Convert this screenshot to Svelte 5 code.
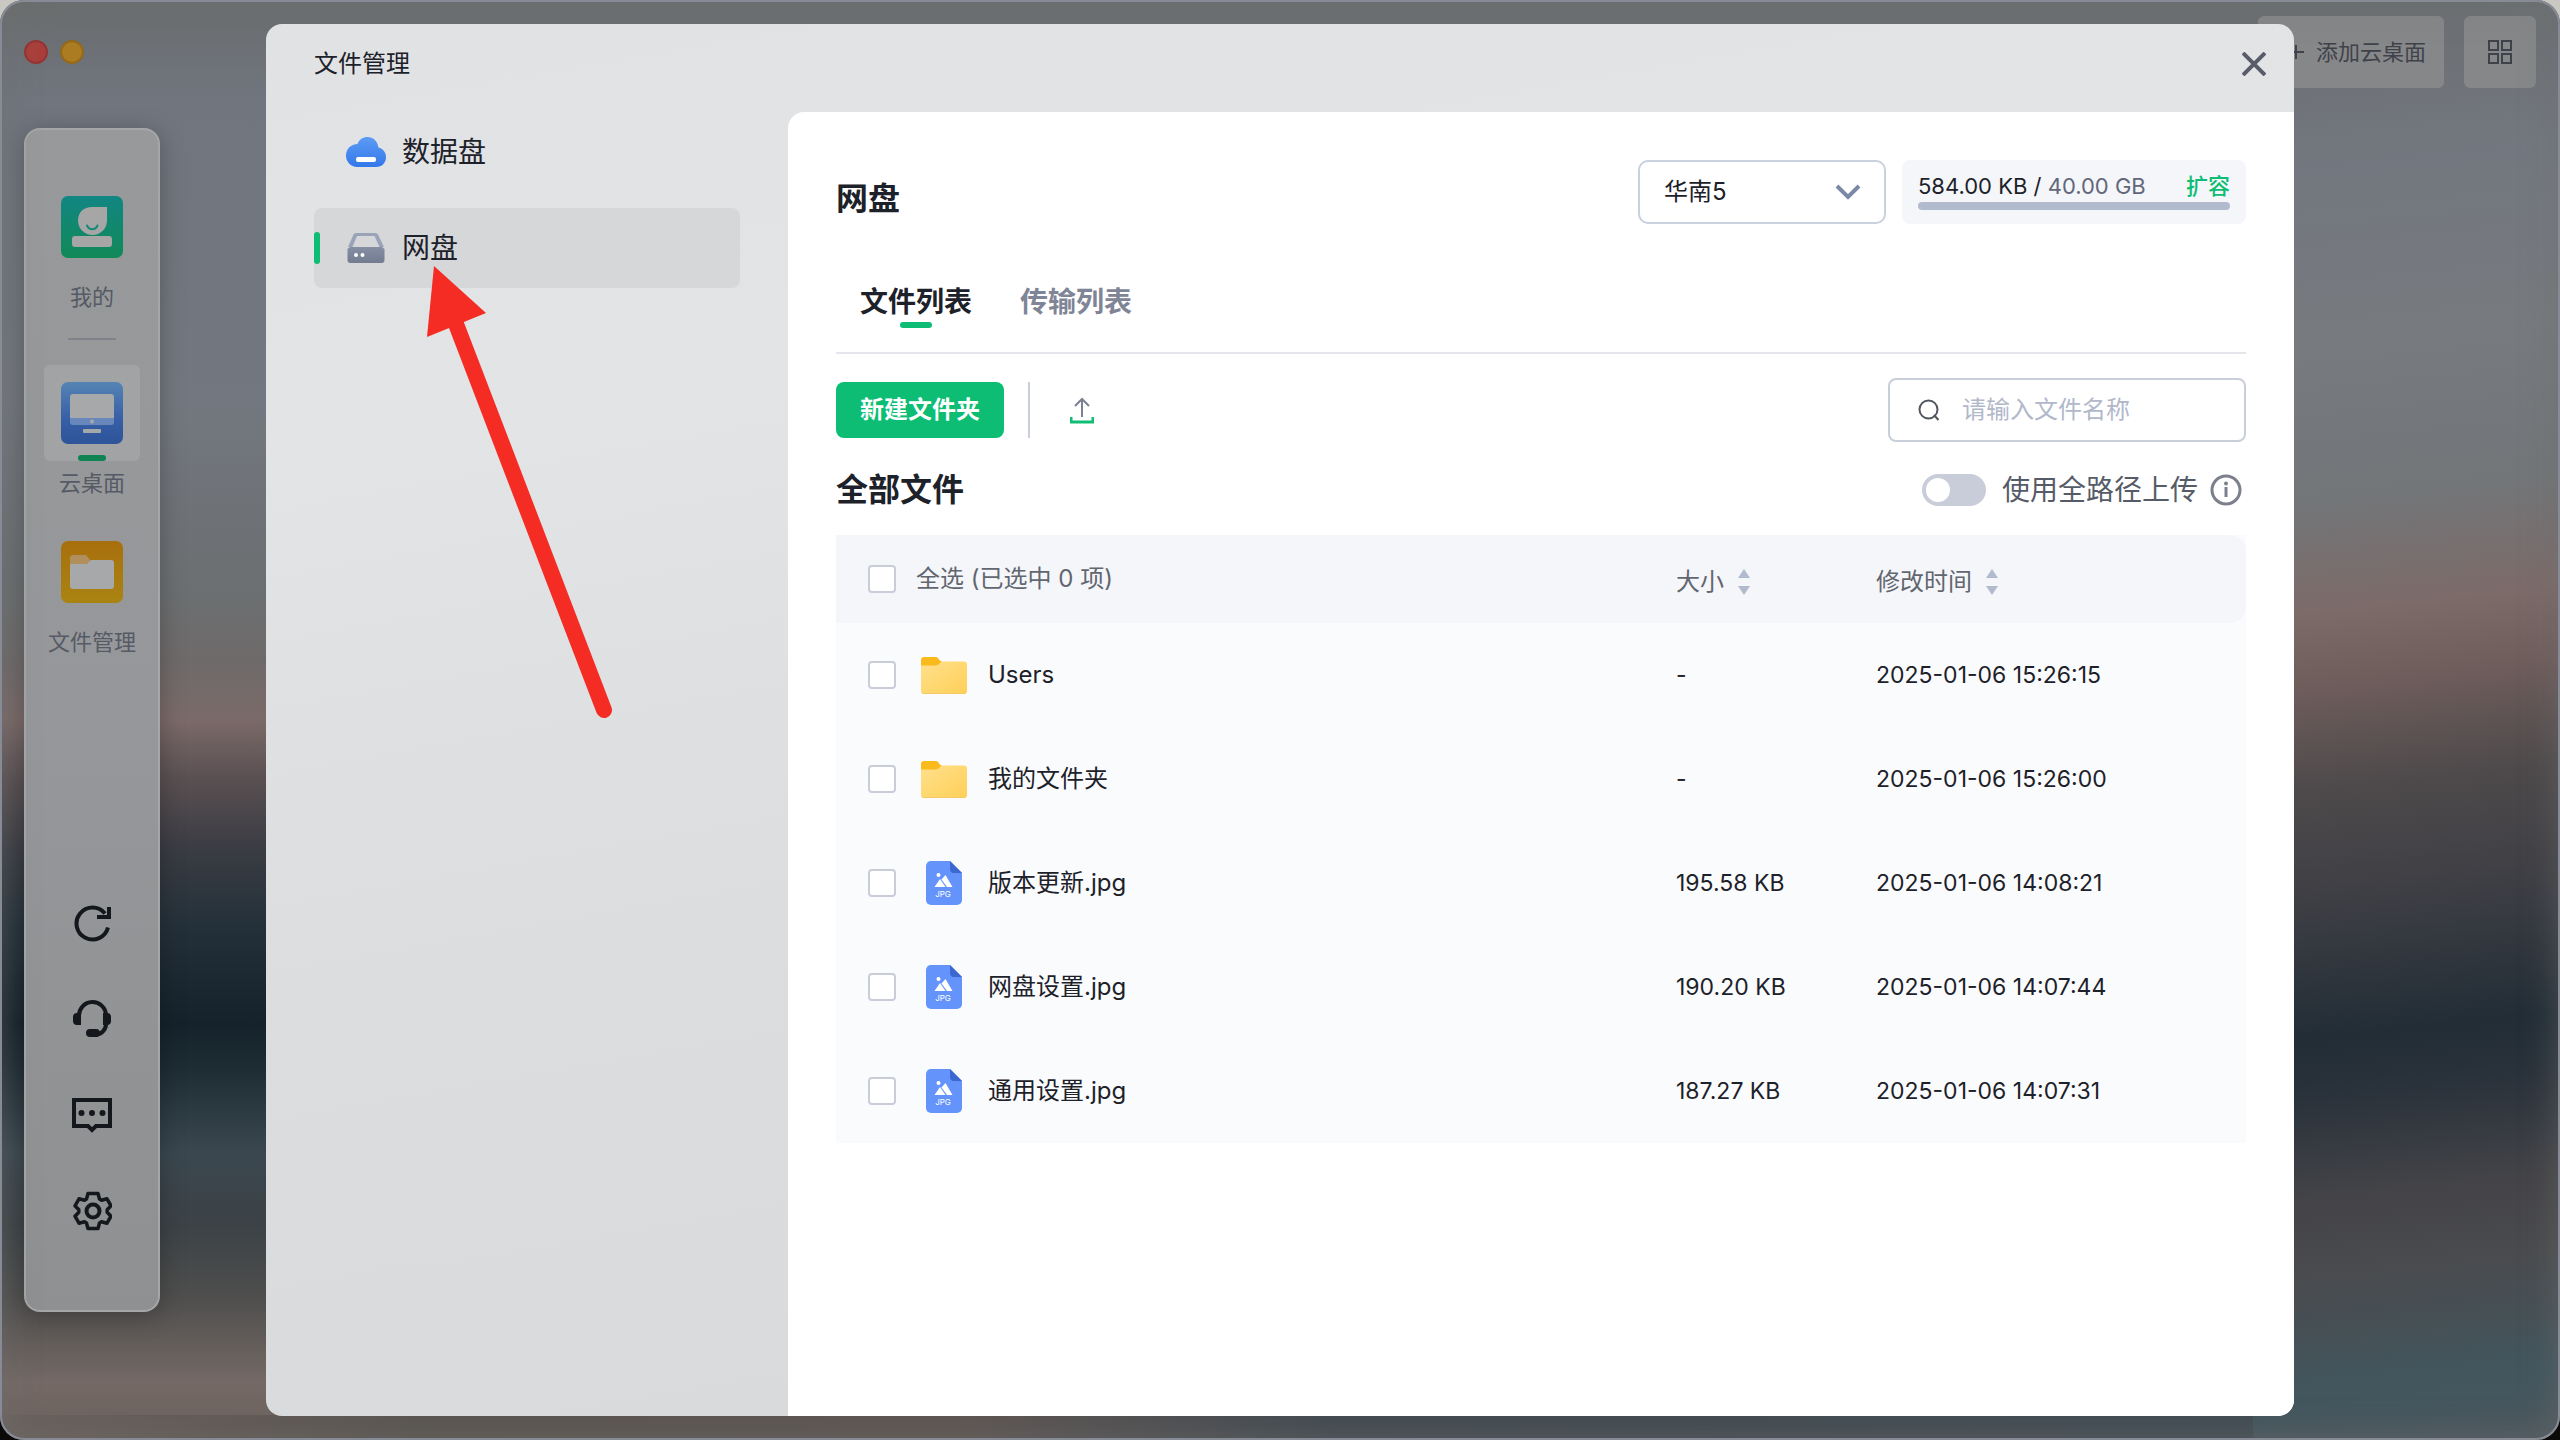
<script lang="ts">
	type Row = { name: string; kind: 'folder' | 'jpg'; size: string; time: string; checked: boolean };

	let files = $state<Row[]>([
		{ name: 'Users', kind: 'folder', size: '-', time: '2025-01-06 15:26:15', checked: false },
		{ name: '我的文件夹', kind: 'folder', size: '-', time: '2025-01-06 15:26:00', checked: false },
		{ name: '版本更新.jpg', kind: 'jpg', size: '195.58 KB', time: '2025-01-06 14:08:21', checked: false },
		{ name: '网盘设置.jpg', kind: 'jpg', size: '190.20 KB', time: '2025-01-06 14:07:44', checked: false },
		{ name: '通用设置.jpg', kind: 'jpg', size: '187.27 KB', time: '2025-01-06 14:07:31', checked: false }
	]);

	let region = $state('华南5');
	let keyword = $state('');
	let fullPath = $state(false);
	let tab = $state('files');
	let disk = $state('net');

	let selected = $derived(files.filter((f) => f.checked).length);

	function toggleAll(event: Event) {
		const on = (event.currentTarget as HTMLInputElement).checked;
		for (const f of files) f.checked = on;
	}
</script>

{#snippet sortIcon()}
	<svg class="sort" width="12" height="26" viewBox="0 0 12 26" aria-hidden="true">
		<path d="M6 0l6 9H0zM6 26l6-9H0z" fill="#b1bbcd" />
	</svg>
{/snippet}

<div class="window">
	<header class="titlebar">
		<div class="lights">
			<button class="light red" aria-label="关闭窗口"></button>
			<button class="light yellow" aria-label="最小化"></button>
		</div>
		<div class="actions">
			<button class="glass">
				<svg width="16" height="16" viewBox="0 0 16 16" aria-hidden="true">
					<path d="M8 1v14M1 8h15" stroke="#3f424a" stroke-width="2" />
				</svg>
				添加云桌面
			</button>
			<button class="glass square" aria-label="视图">
				<svg width="24" height="24" viewBox="0 0 24 24" fill="none" stroke="#3f424a" stroke-width="2" aria-hidden="true">
					<path d="M1 1h9v9H1zM14 1h9v9h-9zM1 14h9v9H1zM14 14h9v9h-9z" />
				</svg>
			</button>
		</div>
	</header>

	<aside class="dock">
		<button class="app">
			<span class="tile">
				<svg width="62" height="62" viewBox="0 0 62 62" aria-hidden="true">
					<defs>
						<linearGradient id="g-me" x1="0" y1="0" x2="0" y2="1">
							<stop offset="0" stop-color="#128683" />
							<stop offset="1" stop-color="#118957" />
						</linearGradient>
					</defs>
					<rect width="62" height="62" rx="7" fill="url(#g-me)" />
					<path d="M31 11h15v13.500a14.500 14.500 0 1 1-29 0C17 16 23 11 31 11z" fill="#a6a6a7" />
					<path d="M26 29.500c2.500 5 8 5 10.500 0" fill="none" stroke="#128875" stroke-width="2" stroke-linecap="round" />
					<rect x="11" y="40" width="40" height="11" rx="3" fill="#a6a6a7" />
				</svg>
			</span>
			<span class="label">我的</span>
		</button>
		<hr />
		<button class="app active">
			<span class="tile">
				<svg width="62" height="62" viewBox="0 0 62 62" aria-hidden="true">
					<defs>
						<linearGradient id="g-desk" x1="0" y1="0" x2="0" y2="1">
							<stop offset="0" stop-color="#5584b4" />
							<stop offset="0.600" stop-color="#365fa6" />
							<stop offset="1" stop-color="#2e5499" />
						</linearGradient>
					</defs>
					<rect width="62" height="62" rx="7" fill="url(#g-desk)" />
					<path d="M9 36h44v4a3 3 0 0 1-3 3H12a3 3 0 0 1-3-3z" fill="#6888bb" />
					<path d="M12 12h38a3 3 0 0 1 3 3v21H9V15a3 3 0 0 1 3-3z" fill="#a7a8aa" />
					<circle cx="31" cy="39.500" r="2" fill="#a7a8aa" />
					<rect x="22" y="47" width="18" height="4" rx="1" fill="#a7a8aa" />
				</svg>
			</span>
			<span class="label">云桌面</span>
		</button>
		<button class="app">
			<span class="tile">
				<svg width="62" height="62" viewBox="0 0 62 62" aria-hidden="true">
					<defs>
						<linearGradient id="g-file" x1="0" y1="0" x2="0" y2="1">
							<stop offset="0" stop-color="#a86f0d" />
							<stop offset="1" stop-color="#a98412" />
						</linearGradient>
					</defs>
					<rect width="62" height="62" rx="7" fill="url(#g-file)" />
					<path d="M9 24v-7a3 3 0 0 1 3-3h13l4 5v5z" fill="#b08f5c" />
					<path d="M9 23h17l4-4h20a3 3 0 0 1 3 3v23a3 3 0 0 1-3 3H12a3 3 0 0 1-3-3z" fill="#a7a8aa" />
				</svg>
			</span>
			<span class="label">文件管理</span>
		</button>

		<div class="tools">
			<button aria-label="刷新">
				<svg width="40" height="40" viewBox="0 0 40 40" fill="none" stroke="#14171b" stroke-width="4" aria-hidden="true">
					<path d="M36 24.500A16 16 0 1 1 33 10.500" />
					<path d="M37 4v10H25" />
				</svg>
			</button>
			<button aria-label="客服">
				<svg width="40" height="40" viewBox="0 0 40 40" aria-hidden="true">
					<path d="M7 20v-3a13 13 0 0 1 27-1v9c0 6-5 11-12 11" fill="none" stroke="#14171b" stroke-width="4" />
					<path d="M5 14h4v12H5a4 4 0 0 1-4-4v-4a4 4 0 0 1 4-4zM31 14h4a4 4 0 0 1 4 4v4a4 4 0 0 1-4 4h-4z" fill="#14171b" />
					<rect x="14" y="30" width="14" height="8" rx="4" fill="#14171b" />
				</svg>
			</button>
			<button aria-label="反馈">
				<svg width="40" height="40" viewBox="0 0 40 40" aria-hidden="true">
					<path d="M2 5h36v26H24l-4 4-4-4H2z" fill="none" stroke="#14171b" stroke-width="4" />
					<circle cx="9.500" cy="18" r="3" fill="#14171b" />
					<circle cx="20" cy="18" r="3" fill="#14171b" />
					<circle cx="30.500" cy="18" r="3" fill="#14171b" />
				</svg>
			</button>
			<button aria-label="设置">
				<svg width="40" height="40" viewBox="0 0 40 40" fill="none" stroke="#14171b" stroke-width="3.500" stroke-linejoin="round" aria-hidden="true">
					<path d="M16 2.500h10l1.500 5.500 2 1.200 5.500-1.400 4 7-3.800 4v2.400l3.800 4-4 7-5.500-1.400-2 1.200-1.500 5.500H16l-1.500-5.500-2-1.200L7 32.200l-4-7 3.800-4v-2.400l-3.800-4 4-7 5.500 1.400 2-1.200z" />
					<circle cx="21" cy="20" r="6.500" stroke-width="4" />
				</svg>
			</button>
		</div>
	</aside>

	<section class="modal" role="dialog" aria-labelledby="dialog-title">
		<header class="modal-head">
			<h1 id="dialog-title">文件管理</h1>
			<button class="close" aria-label="关闭">
				<svg width="24" height="24" viewBox="0 0 24 24" aria-hidden="true">
					<path d="M1 1l22 22M23 1L1 23" stroke="#585d69" stroke-width="4" />
				</svg>
			</button>
		</header>

		<div class="modal-body">
			<nav>
				<button class="disk" class:current={disk === 'data'} onclick={() => (disk = 'data')}>
					<svg width="40" height="32" viewBox="0 0 40 32" aria-hidden="true">
						<defs>
							<linearGradient id="g-cloud" x1="0" y1="0" x2="0" y2="1">
								<stop offset="0" stop-color="#5c9cf5" />
								<stop offset="1" stop-color="#3378ea" />
							</linearGradient>
						</defs>
						<path d="M11 31a11 11 0 0 1-11-11.500C0 13 5 8 11.500 8 13 3.500 17 1 21.500 1 27 1 31.500 5 32.500 11.500 37 12.500 40 16.500 40 21c0 6-4 10-10 10z" fill="url(#g-cloud)" />
						<rect x="10" y="21" width="20" height="5" rx="2" fill="#fff" />
					</svg>
					数据盘
				</button>
				<button class="disk" class:current={disk === 'net'} onclick={() => (disk = 'net')}>
					<svg width="40" height="32" viewBox="0 0 40 32" aria-hidden="true">
						<defs>
							<linearGradient id="g-drive" x1="0" y1="0" x2="0" y2="1">
								<stop offset="0" stop-color="#868ea4" />
								<stop offset="1" stop-color="#737b8f" />
							</linearGradient>
						</defs>
						<path fill-rule="evenodd" d="M10 1h19.500a3 3 0 0 1 2.500 1.500L38 15H2L7.500 2.500A3 3 0 0 1 10 1zM11 4L6.500 15h27L28.500 4z" fill="#9aa3b8" />
						<path d="M4 15h32l2.500 2v11a3 3 0 0 1-3 3h-31a3 3 0 0 1-3-3V17z" fill="url(#g-drive)" />
						<circle cx="10" cy="23" r="2" fill="#fff" />
						<circle cx="16.500" cy="23" r="2" fill="#fff" />
					</svg>
					网盘
				</button>
			</nav>

			<main>
				<div class="head">
					<h2>网盘</h2>
					<div class="region">
						<select bind:value={region} aria-label="区域">
							<option>华南5</option>
						</select>
						<svg width="26" height="16" viewBox="0 0 26 16" aria-hidden="true">
							<path d="M2 2l11 11L24 2" fill="none" stroke="#7c89a6" stroke-width="4" />
						</svg>
					</div>
					<div class="quota">
						<p>
							<span>584.00 KB / <em>40.00 GB</em></span>
							<a href="#expand">扩容</a>
						</p>
						<div class="bar"></div>
					</div>
				</div>

				<div class="tabs" role="tablist">
					<button role="tab" aria-selected={tab === 'files'} onclick={() => (tab = 'files')}>文件列表</button>
					<button role="tab" aria-selected={tab === 'transfers'} onclick={() => (tab = 'transfers')}>传输列表</button>
				</div>

				<div class="toolbar">
					<button class="primary">新建文件夹</button>
					<span class="sep"></span>
					<button class="upload" aria-label="上传">
						<svg width="24" height="28" viewBox="0 0 24 28" fill="none" stroke-width="2" aria-hidden="true">
							<path d="M12 21V3M5 10l7-7 7 7" stroke="#7b8190" />
							<path d="M1 21v5h22v-5" stroke="#12bd74" stroke-width="3" />
						</svg>
					</button>
					<label class="search">
						<svg width="22" height="22" viewBox="0 0 22 22" fill="none" stroke="#51555f" stroke-width="2" aria-hidden="true">
							<circle cx="10.500" cy="10.500" r="9" />
							<path d="M16 16l4.500 5" />
						</svg>
						<input type="text" bind:value={keyword} placeholder="请输入文件名称" aria-label="搜索文件" />
					</label>
				</div>

				<div class="subhead">
					<h2>全部文件</h2>
					<label class="switch">
						<input type="checkbox" role="switch" bind:checked={fullPath} />
						使用全路径上传
					</label>
					<svg width="32" height="32" viewBox="0 0 32 32" aria-hidden="true">
						<circle cx="16" cy="16" r="14" fill="none" stroke="#7b808c" stroke-width="3" />
						<path d="M16 13v10" stroke="#7b808c" stroke-width="3" />
						<circle cx="16" cy="9.500" r="2" fill="#7b808c" />
					</svg>
				</div>

				<table>
					<colgroup>
						<col />
						<col class="col-size" />
						<col class="col-time" />
					</colgroup>
					<thead>
						<tr>
							<th>
								<label class="all">
									<input type="checkbox" checked={selected === files.length} onchange={toggleAll} />
									全选 (已选中 {selected} 项)
								</label>
							</th>
							<th><button>大小{@render sortIcon()}</button></th>
							<th><button>修改时间{@render sortIcon()}</button></th>
						</tr>
					</thead>
					<tbody>
						{#each files as file (file.name)}
							<tr>
								<td>
									<label>
										<input type="checkbox" bind:checked={file.checked} />
										{#if file.kind === 'folder'}
											<svg width="48" height="48" viewBox="0 0 48 48" aria-hidden="true">
												<defs>
													<linearGradient id="g-folder" x1="0" y1="0" x2="1" y2="1">
														<stop offset="0" stop-color="#ffe08c" />
														<stop offset="1" stop-color="#ffd058" />
													</linearGradient>
												</defs>
												<path d="M1 15V9a3 3 0 0 1 3-3h12c3 0 3 4.500 6 4.500V15z" fill="#fbba1c" />
												<path d="M1 14.500h15c3 0 4-4 7-4h21a3 3 0 0 1 3 3V40a3 3 0 0 1-3 3H4a3 3 0 0 1-3-3z" fill="url(#g-folder)" />
												<path d="M2 41.500q1 1 2 1h40q1 0 2-1" fill="none" stroke="#f6c766" />
											</svg>
										{:else}
											<svg width="48" height="48" viewBox="0 0 48 48" aria-hidden="true">
												<path d="M11 2h19l12 12v27a5 5 0 0 1-5 5H11a5 5 0 0 1-5-5V7a5 5 0 0 1 5-5z" fill="#6593fc" />
												<path d="M30 2l12 12h-8a4 4 0 0 1-4-4z" fill="#3a67d0" />
												<circle cx="18.500" cy="16" r="2" fill="#fff" />
												<path d="M14.500 28l5.500-8 5.500 8zM21.500 20.500l4-4.500 7 12h-5.500z" fill="#fff" />
												<text x="23" y="38" text-anchor="middle">JPG</text>
											</svg>
										{/if}
										{file.name}
									</label>
								</td>
								<td>{file.size}</td>
								<td>{file.time}</td>
							</tr>
						{/each}
					</tbody>
				</table>
			</main>
		</div>

		<!-- guide arrow pointing at the current disk -->
		<svg class="pointer" width="200" height="470" viewBox="0 0 200 470" aria-hidden="true">
			<path d="M18 2l52 47-59 24z" fill="#f42c24" />
			<path d="M40 60l148 386" stroke="#f42c24" stroke-width="16" stroke-linecap="round" />
		</svg>
	</section>
</div>

<style>
	:global(body) {
		margin: 0;
		background: linear-gradient(#c9c8c2 50%, #0b0a08 50%);
	}

	.window {
		position: relative;
		box-sizing: border-box;
		min-height: 100vh;
		display: flex;
		flex-direction: column;
		align-items: flex-start;
		padding-bottom: 128px;
		border-radius: 24px;
		font-family: Inter, 'Noto Sans CJK SC', sans-serif;
		font-size: 24px;
		line-height: 32px;
		color: #1d2129;
		background:
			linear-gradient(174deg, #6a6e70 0%, #73777f 12%, #777a7e 24%, #727679 34%, #7c6b69 42%, #6f5d5c 47%, #4e4a4b 54%, #3d3e44 62%, #222d36 71%, #2a323b 75%, #444448 82%, #4a4b4e 87%, #42565e 95%, #4b565d 100%) no-repeat right / 12% 100%,
			linear-gradient(90deg, #6b615d, #5a5550 16%, #5d5552 38%, #424a51 52%, #414c53 88%, #4b565d) no-repeat bottom / 100% 25px,
			linear-gradient(#6a6d6e 0%, #70757e 7%, #73777f 28%, #6b6f71 41%, #6f6a6a 46%, #7b6a69 50%, #5a5052 54%, #3a3c43 59%, #25313a 64%, #15222b 71%, #1d2b33 74%, #3a474f 80%, #3c4246 85%, #4e4e4d 90%, #746965 96%, #6b615d 100%);
	}

	/* frame line and the lighter haze along the window edge */
	.window::after {
		content: '';
		position: absolute;
		inset: 0;
		border-radius: inherit;
		box-shadow:
			inset 0 0 0 2px #868b96,
			inset 0 0 36px rgb(110 110 110 / 0.6);
		pointer-events: none;
	}

	h1,
	h2,
	p {
		margin: 0;
	}

	button {
		padding: 0;
		border: 0;
		background: none;
		font: inherit;
		color: inherit;
		cursor: pointer;
	}

	svg {
		display: block;
		flex-shrink: 0;
	}

	.titlebar {
		align-self: stretch;
		display: flex;
		align-items: center;
		justify-content: space-between;
		padding: 16px 24px 40px;
	}

	.lights,
	.actions {
		display: flex;
		gap: 12px;
	}

	.light {
		width: 24px;
		height: 24px;
		border-radius: 50%;
	}

	.red {
		background: #a93f3b;
		border: 2px solid #953432;
	}

	.yellow {
		background: #ab7c22;
		border: 2px solid #93691a;
	}

	.actions {
		gap: 20px;
	}

	.glass {
		display: flex;
		align-items: center;
		justify-content: center;
		gap: 12px;
		height: 72px;
		padding: 0 18px 0 30px;
		border-radius: 6px;
		background: #868789;
		font-size: 22px;
		color: #3f424a;
	}

	.square {
		width: 72px;
		padding: 0;
	}

	.dock {
		flex: 1;
		box-sizing: border-box;
		width: 136px;
		margin-left: 24px;
		padding: 49px 0 79px;
		display: flex;
		flex-direction: column;
		align-items: center;
		gap: 25px;
		border: 2px solid #a5a6a7;
		border-radius: 16px;
		background: linear-gradient(#98999a, #96979a 50%, #8e9091);
		box-shadow: 0 4px 24px rgb(0 0 0 / 0.25);
	}

	.dock hr {
		width: 48px;
		height: 2px;
		margin: 0;
		border: 0;
		background: #7f828a;
	}

	.app {
		display: flex;
		flex-direction: column;
		align-items: center;
		gap: 6px;
	}

	.tile {
		position: relative;
		display: grid;
		place-items: center;
		width: 96px;
		height: 96px;
		border-radius: 6px;
	}

	.active .tile {
		background: #a2a3a4;
	}

	.active .tile::after {
		content: '';
		position: absolute;
		bottom: 0;
		width: 28px;
		height: 6px;
		border-radius: 3px;
		background: #0f8452;
	}

	.label {
		font-size: 22px;
		color: #555a65;
	}

	.tools {
		margin-top: auto;
		display: flex;
		flex-direction: column;
		gap: 56px;
	}

	.modal {
		position: absolute;
		inset: 24px 266px;
		z-index: 1;
		display: flex;
		flex-direction: column;
		overflow: hidden;
		border-radius: 16px;
		background: linear-gradient(170deg, #e1e2e4, #e2e4e5 25%, #dcdddf 55%, #d8d9db);
	}

	.modal-head {
		display: flex;
		align-items: center;
		justify-content: space-between;
		box-sizing: border-box;
		height: 88px;
		padding: 0 28px 8px 48px;
	}

	.modal-head h1 {
		font-size: 24px;
		font-weight: 400;
	}

	.modal-body {
		flex: 1;
		display: flex;
	}

	nav {
		box-sizing: border-box;
		width: 522px;
		padding: 0 48px;
		display: flex;
		flex-direction: column;
		gap: 16px;
	}

	.disk {
		position: relative;
		display: flex;
		align-items: center;
		gap: 16px;
		height: 80px;
		padding-left: 32px;
		border-radius: 8px;
		font-size: 28px;
	}

	.current {
		background: #d6d7d9;
	}

	.current::before {
		content: '';
		position: absolute;
		left: 0;
		width: 6px;
		height: 32px;
		border-radius: 3px;
		background: #0cbd73;
	}

	main {
		flex: 1;
		min-width: 0;
		padding: 48px;
		border-top-left-radius: 16px;
		background: #fff;
	}

	h2 {
		font-size: 32px;
		font-weight: 600;
		line-height: 40px;
	}

	.head {
		display: flex;
		align-items: center;
		gap: 16px;
	}

	.head h2 {
		margin-right: auto;
		padding-top: 14px;
	}

	.region {
		display: grid;
		align-items: center;
		width: 248px;
	}

	.region select,
	.region svg {
		grid-area: 1 / 1;
	}

	.region svg {
		justify-self: end;
		margin-right: 25px;
		pointer-events: none;
	}

	.region select {
		appearance: none;
		height: 64px;
		padding: 0 24px;
		border: 2px solid #c9d0de;
		border-radius: 10px;
		background: #fff;
		font: inherit;
		color: inherit;
	}

	.quota {
		box-sizing: border-box;
		width: 344px;
		height: 64px;
		padding: 10px 16px;
		border-radius: 8px;
		background: #f4f6fa;
		font-size: 22px;
	}

	.quota p {
		display: flex;
		justify-content: space-between;
		white-space: nowrap;
	}

	.quota em {
		font-style: normal;
		color: #62677a;
	}

	.quota a {
		color: #0cbd73;
		font-weight: 500;
		text-decoration: none;
	}

	.bar {
		height: 8px;
		border-radius: 4px;
		background: #b1bbcd;
	}

	.tabs {
		display: flex;
		gap: 48px;
		height: 70px;
		margin-top: 58px;
		padding: 0 24px;
		border-bottom: 2px solid #e5e6ed;
	}

	.tabs button {
		display: flex;
		flex-direction: column;
		align-items: center;
		font-size: 28px;
		font-weight: 600;
		line-height: 40px;
		color: #7f8596;
	}

	.tabs [aria-selected='true'] {
		color: #1d2129;
	}

	.tabs [aria-selected='true']::after {
		content: '';
		width: 32px;
		height: 6px;
		border-radius: 3px;
		background: #0cbd73;
	}

	.toolbar {
		display: flex;
		align-items: center;
		margin-top: 24px;
	}

	.primary {
		height: 56px;
		padding: 0 24px;
		border-radius: 8px;
		background: #0cbd73;
		color: #fff;
		font-weight: 600;
	}

	.sep {
		width: 2px;
		height: 56px;
		margin: 0 40px 0 24px;
		background: #c9cedb;
	}

	.search {
		box-sizing: border-box;
		width: 358px;
		height: 64px;
		margin-left: auto;
		padding: 0 28px;
		display: flex;
		align-items: center;
		gap: 22px;
		border: 2px solid #c9cedb;
		border-radius: 8px;
	}

	.search input {
		flex: 1;
		min-width: 0;
		padding: 0;
		border: 0;
		outline: 0;
		background: none;
		font: inherit;
	}

	.search input::placeholder {
		color: #b1b8ca;
	}

	.subhead {
		display: flex;
		align-items: center;
		gap: 12px;
		margin: 28px 0 25px;
		padding-right: 4px;
	}

	.subhead h2 {
		margin-right: auto;
	}

	.switch {
		display: flex;
		align-items: center;
		gap: 16px;
		font-size: 28px;
		color: #565b68;
	}

	.switch input {
		appearance: none;
		width: 64px;
		height: 32px;
		margin: 0;
		padding: 4px;
		border-radius: 16px;
		background: #c9cdd9;
	}

	.switch input::before {
		content: '';
		display: block;
		width: 24px;
		height: 24px;
		border-radius: 50%;
		background: #fff;
	}

	.switch input:checked {
		background: #0cbd73;
	}

	.switch input:checked::before {
		margin-left: auto;
	}

	table {
		width: 100%;
		table-layout: fixed;
		border-collapse: separate;
		border-spacing: 0;
		background: #fafbfd;
	}

	.col-size {
		width: 200px;
	}

	.col-time {
		width: 370px;
	}

	th,
	td {
		padding: 0;
		text-align: left;
		font-weight: 400;
	}

	th {
		height: 88px;
		background: #f4f6fa;
		color: #62666f;
	}

	th:last-child {
		border-radius: 0 16px 16px 0;
	}

	th button {
		display: flex;
		align-items: center;
		gap: 14px;
		padding-top: 6px;
	}

	td {
		height: 104px;
	}

	td + td {
		font-size: 23px;
	}

	td label,
	.all {
		display: flex;
		align-items: center;
		padding-left: 32px;
	}

	.all {
		gap: 20px;
	}

	td label svg {
		margin: 0 20px 0 24px;
	}

	td label text {
		font-size: 8px;
		fill: #fff;
	}

	table input {
		appearance: none;
		box-sizing: border-box;
		width: 28px;
		height: 28px;
		margin: 0;
		border: 2px solid #c9cdd9;
		border-radius: 4px;
		background: #fff;
	}

	table input:checked {
		background: #0cbd73;
		border-color: #0cbd73;
	}

	.pointer {
		position: absolute;
		left: 150px;
		top: 240px;
		pointer-events: none;
	}
</style>
